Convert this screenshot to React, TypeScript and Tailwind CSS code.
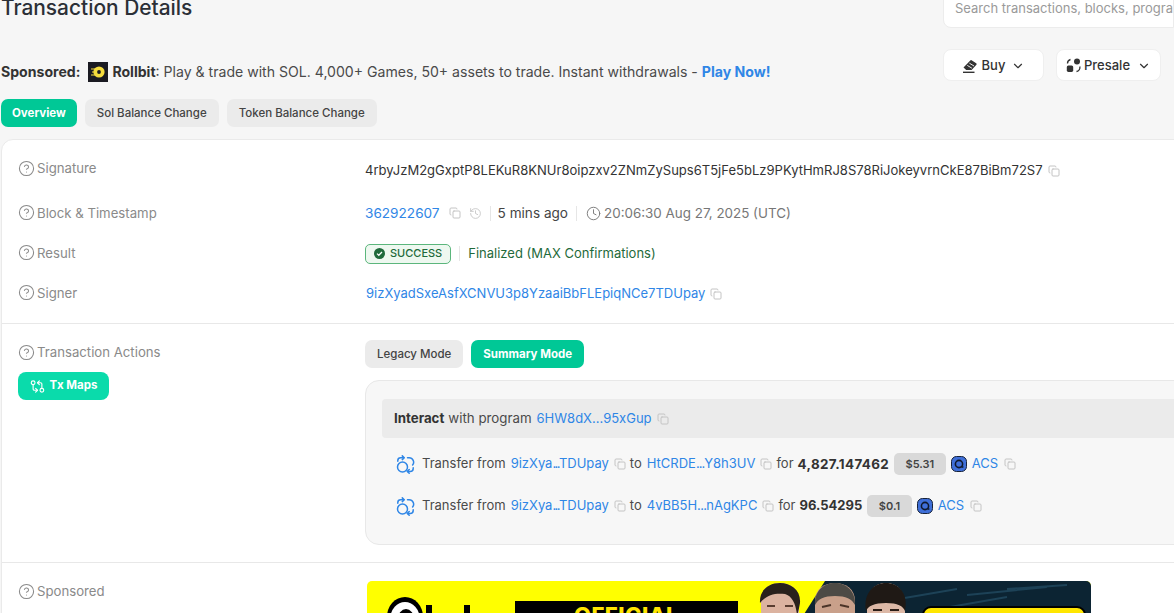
import { ChevronDown, CircleHelp, Clock, Copy, GitCompareArrows, History } from 'lucide-react';
import type { ReactNode } from 'react';

function CopyBtn({ className = '' }: { className?: string }) {
  return <Copy size={12} strokeWidth={2} className={`text-[#c4c4c4] shrink-0 ${className}`} />;
}

function Label({ children }: { children: ReactNode }) {
  return (
    <div className="flex items-center gap-[2px] text-[13.2px] leading-5 text-[#8a8a8a]">
      <CircleHelp size={17} strokeWidth={1.5} className="text-[#8a8a8a]" />
      {children}
    </div>
  );
}

function Row({ label, className, children }: { label: ReactNode; className: string; children: ReactNode }) {
  return (
    <div className={`flex items-center ${className}`}>
      <div className="w-[347px] shrink-0 pb-[2px]">
        <Label>{label}</Label>
      </div>
      <div className="flex items-center min-w-0 whitespace-nowrap text-[13px]">{children}</div>
    </div>
  );
}

function TransferIcon() {
  return (
    <svg width="19" height="19" viewBox="0 0 19 19" fill="none" stroke="#2f86e6" strokeWidth="1.5" strokeLinecap="round" strokeLinejoin="round" className="shrink-0">
      <circle cx="6.5" cy="12" r="5" />
      <path d="M11.5 2.8h1.7a4.4 4.4 0 0 1 3.4 7.2" />
      <path d="M1.8 6.2V5.4a2.8 2.8 0 0 1 2.8-2.6h3.2" />
      <path d="M6.3 0.9 8.2 2.8 6.3 4.6" />
      <path d="M17.2 12.8v.6a3 3 0 0 1-3 3h-2.6" />
      <path d="M13.2 14.5 11.3 16.4 13.2 18.2" />
    </svg>
  );
}

function AcsIcon() {
  return (
    <svg width="16" height="16" viewBox="0 0 16 16" className="shrink-0">
      <rect x="0.5" y="0.5" width="15" height="15" rx="5" fill="#3f6fd8" stroke="#16223a" />
      <circle cx="8" cy="8" r="3.6" fill="none" stroke="#10192c" strokeWidth="1.6" />
      <path d="M10.4 11h2" stroke="#10192c" strokeWidth="1.6" />
    </svg>
  );
}

function Addr({ head, tail, dots }: { head: string; tail: string; dots: string }) {
  return (
    <span className="text-[#2f86e6]">
      {head}
      <span className={dots}>...</span>
      {tail}
    </span>
  );
}

function Transfer({ children, amount, usd, pad, amountClass }: { children: ReactNode; amount: string; usd: string; pad: string; amountClass: string }) {
  return (
    <div className={`flex items-center whitespace-nowrap text-[13px] text-[#4a4a4a] ${pad}`}>
      <TransferIcon />
      <span className="ml-[7px]">Transfer from</span>
      <span className="ml-[5px]">
        <Addr head="9izXya" tail="TDUpay" dots="tracking-[-1.6px]" />
      </span>
      <CopyBtn className="ml-[5px]" />
      <span className="ml-[4px]">to</span>
      <span className="ml-[5px]">{children}</span>
      <CopyBtn className="ml-[5px]" />
      <span className="ml-[4px]">for</span>
      <span className={`ml-[4px] font-bold text-[#333333] ${amountClass}`}>{amount}</span>
      <span className="ml-[5px] rounded-[5px] bg-[#d9d9d9] px-[11.5px] py-[3px] text-[11px] leading-[16px] font-semibold text-[#444444]">{usd}</span>
      <span className="ml-[5px] flex"><AcsIcon /></span>
      <span className="ml-[5px] text-[#2f86e6]">ACS</span>
      <CopyBtn className="ml-[6px]" />
    </div>
  );
}

function Banner() {
  return (
    <div className="relative ml-[2px] h-[60px] w-[724px] overflow-hidden rounded-t-[5px] bg-[#ffff00]">
      <svg width="724" height="60" viewBox="0 0 724 60" className="absolute inset-0">
        <ellipse cx="38" cy="36" rx="18" ry="20" fill="#000000" />
        <ellipse cx="38" cy="37" rx="14.5" ry="16" fill="#ffffff" />
        <ellipse cx="39" cy="38" rx="8" ry="10" fill="#000000" />
        <path d="M62 24v36M100 24v36" stroke="#000000" strokeWidth="6" />
        <polygon points="458,0 724,0 724,60 420,60" fill="#0c2433" />
        <path d="M520 20 590 8M600 14 680 6M560 30 640 16M640 8 700 4" stroke="#1d4257" strokeWidth="2" />
        <path d="M394 60V20c0-12 9-18 19-18s19 6 19 18v40z" fill="#dcb3a0" />
        <path d="M393 22c-1-13 9-20 20-20s21 7 20 20c-1 6-2 10-3 12-1-11-5-19-12-21-9-1-18 0-25 9z" fill="#2a211c" />
        <path d="M400 25h8M418 25h8" stroke="#5a3d30" strokeWidth="2" />
        <path d="M448 60V20c0-12 9-18 20-18s20 6 20 18v40z" fill="#c9a08a" />
        <path d="M448 24c-1-14 9-22 20-22s21 8 20 22c-3-6-9-9-20-9s-17 3-20 9z" fill="#4d4a45" />
        <path d="M455 26l9-2M473 24l9 2" stroke="#4b3428" strokeWidth="2" />
        <path d="M500 60V24c0-14 8-22 19-22s19 8 19 22v36z" fill="#dcb8a6" />
        <path d="M499 30c-3-18 8-28 20-28s23 10 19 28c-2-5-7-8-19-8s-18 3-20 8z" fill="#1f1915" />
        <path d="M506 29h9M523 29h9" stroke="#2a1d16" strokeWidth="2" />
        <path d="M556 60V34a8 8 0 0 1 8-8h146a8 8 0 0 1 8 8v26z" fill="#ffe600" stroke="#000000" strokeWidth="2" />
      </svg>
      <div className="absolute left-[148px] top-[20px] h-[40px] w-[223px] bg-black pt-[2px] text-center text-[22px] leading-[24px] font-extrabold tracking-[0.5px] text-[#ffe600]">OFFICIAL</div>
    </div>
  );
}

export default function App() {
  return (
    <div className="h-[613px] w-[1174px] overflow-hidden bg-[#f6f6f6] text-[#333333] [font-family:Inter,sans-serif]">
      <div className="flex h-[29px] items-start justify-between">
        <h1 className="-mt-[6px] pl-[1px] text-[20.9px] leading-[28px] font-medium text-[#2b2f36]">Transaction Details</h1>
        <div className="-mt-[11px] flex h-[39px] w-[231px] items-center overflow-hidden rounded-bl-[8px] border border-[#ececec] bg-white pl-[11px] whitespace-nowrap text-[13px] text-[#9a9a9a]">
          Search transactions, blocks, programs and tokens
        </div>
      </div>

      <div className="mt-[20px] flex h-[32px] items-start justify-between pl-[1px]">
        <div className="mt-[12px] flex items-center whitespace-nowrap text-[14.08px] text-[#4a4a4a]">
          <span className="font-bold text-[#333333]">Sponsored:</span>
          <svg width="20" height="20" viewBox="0 0 20 20" className="ml-[8px]">
            <rect width="20" height="20" fill="#1b1b22" />
            <circle cx="11" cy="10" r="5.6" fill="#f5dc3d" />
            <circle cx="11" cy="10" r="1.9" fill="#1b1b22" />
            <path d="M3 7h4M4 10h3M3 13h4" stroke="#f5dc3d" strokeWidth="1" />
          </svg>
          <span className="ml-[4px] font-bold text-[#333333]">Rollbit</span>
          <span>: Play &amp; trade with SOL. 4,000+ Games, 50+ assets to trade. Instant withdrawals -&nbsp;</span>
          <span className="font-bold text-[#2f86e6]">Play Now!</span>
        </div>
        <div className="flex items-center gap-[12px] pr-[13px]">
          <button type="button" className="flex h-[32px] w-[101px] items-center justify-center gap-[4px] rounded-[8px] border border-[#efefef] bg-white pt-px text-[13px] font-medium text-[#333333]">
            <svg width="16" height="16" viewBox="0 0 16 16" fill="#333333">
              <path d="M1.5 9.5 8.3 2.4a1 1 0 0 1 1.3-.1l4.6 3a1 1 0 0 1 .2 1.5L9.6 12H4.2z" />
              <path d="M1 14.3h11.5" stroke="#333333" strokeWidth="1.4" />
              <path d="M5.3 7.4l4.6 2.8M7.4 5.2l4.6 2.8" stroke="#ffffff" strokeWidth="0.9" />
            </svg>
            Buy
            <ChevronDown size={14} strokeWidth={2} className="ml-[2px]" />
          </button>
          <button type="button" className="flex h-[32px] w-[105px] items-center justify-center gap-[3px] rounded-[8px] border border-[#efefef] bg-white pt-px text-[13px] font-medium text-[#333333]">
            <svg width="15" height="15" viewBox="0 0 15 15">
              <circle cx="11" cy="3.5" r="3" fill="#333333" />
              <rect x="0.8" y="7.5" width="6.4" height="6.4" rx="1.6" fill="#333333" />
              <path d="M1.5 5.5A4 4 0 0 1 4.5 1.5M13.8 8.5A4 4 0 0 1 10.5 13.5" fill="none" stroke="#333333" strokeWidth="1.3" />
            </svg>
            Presale
            <ChevronDown size={14} strokeWidth={2} className="ml-[4px]" />
          </button>
        </div>
      </div>

      <div className="mt-[18px] flex gap-[8px] pl-[1px] text-[11.5px] leading-[28px]">
        <div className="h-[28px] rounded-[7px] bg-[#00c896] px-[11px] font-bold text-white">Overview</div>
        <div className="h-[28px] rounded-[7px] bg-[#ebebeb] px-[12px] font-medium text-[#444444]">Sol Balance Change</div>
        <div className="h-[28px] rounded-[7px] bg-[#ebebeb] px-[12px] font-medium text-[#444444]">Token Balance Change</div>
      </div>

      <div className="mt-[12px] ml-[1px] h-[500px] w-[1200px] rounded-tl-[12px] border border-[#eaeaea] bg-white pl-[16px]">
        <Row label="Signature" className="h-[58px]">
          <span className="flex items-center pt-[4px]">
            <span className="text-[#333333] text-[13.04px]">4rbyJzM2gGxptP8LEKuR8KNUr8oipzxv2ZNmZySups6T5jFe5bLz9PKytHmRJ8S78RiJokeyvrnCkE87BiBm72S7</span>
            <CopyBtn className="ml-[5px]" />
          </span>
        </Row>
        <Row label="Block &amp; Timestamp" className="h-[31px]">
          <span className="text-[13.6px] text-[#2f86e6]">362922607</span>
          <CopyBtn className="ml-[9px]" />
          <History size={13} strokeWidth={1.6} className="ml-[8px] text-[#c4c4c4]" />
          <span className="ml-[8px] h-[15px] w-px bg-[#e6e6e6]" />
          <span className="ml-[7px] text-[13.6px] text-[#444444]">5 mins ago</span>
          <span className="ml-[8px] h-[15px] w-px bg-[#e6e6e6]" />
          <Clock size={15} strokeWidth={1.5} className="ml-[9px] text-[#777777]" />
          <span className="ml-[3px] text-[13.4px] text-[#777777]">20:06:30 Aug 27, 2025 (UTC)</span>
        </Row>
        <Row label="Result" className="mt-[9px] h-[31px]">
          <span className="flex h-[20px] items-center gap-[5px] rounded-[5px] border border-[#5bb67c] bg-[#eef8f0] px-[8px] text-[11px] font-medium text-[#1f6a3b]">
            <svg width="11" height="11" viewBox="0 0 11 11">
              <circle cx="5.5" cy="5.5" r="5.5" fill="#1f6a3b" />
              <path d="M3 5.6 4.8 7.3 8 4" fill="none" stroke="#ffffff" strokeWidth="1.3" />
            </svg>
            SUCCESS
          </span>
          <span className="ml-[8px] h-[15px] w-px bg-[#e6e6e6]" />
          <span className="ml-[8px] text-[#1f6a3b]">Finalized (MAX Confirmations)</span>
        </Row>
        <Row label="Signer" className="mt-[9px] h-[31px]">
          <span className="ml-px text-[#2f86e6]">9izXyadSxeAsfXCNVU3p8YzaaiBbFLEpiqNCe7TDUpay</span>
          <CopyBtn className="ml-[5px]" />
        </Row>

        <div className="-ml-[16px] mt-[14px] h-px bg-[#e8e8e8]" />

        <div className="flex pt-[16px]">
          <div className="w-[347px] shrink-0">
            <div className="pt-[2px]"><Label>Transaction Actions</Label></div>
            <div className="mt-[10px] flex h-[28px] w-[91px] items-center justify-center gap-[5px] rounded-[8px] bg-[#0adbab] text-[11.5px] font-bold text-white">
              <GitCompareArrows size={15} strokeWidth={1.8} />
              Tx Maps
            </div>
          </div>
          <div className="min-w-0 flex-1">
            <div className="flex gap-[8px] text-[11.5px] leading-[28px]">
              <div className="h-[28px] rounded-[7px] bg-[#ebebeb] px-[12px] font-medium text-[#444444]">Legacy Mode</div>
              <div className="h-[28px] rounded-[7px] bg-[#00c896] px-[12px] font-bold text-white">Summary Mode</div>
            </div>
            <div className="mt-[12px] h-[165px] rounded-[14px] border border-[#e8e8e8] bg-[#f7f7f7] pt-[18px] pl-[16px]">
              <div className="flex h-[39px] items-center rounded-[4px] bg-[#ebebeb] pl-[12px] text-[13.3px] text-[#4a4a4a]">
                <span className="font-bold text-[#333333]">Interact</span>
                <span className="ml-[4px]">with program</span>
                <span className="ml-[5px] text-[13px]">
                  <Addr head="6HW8dX" tail="95xGup" dots="" />
                </span>
                <CopyBtn className="ml-[5px]" />
              </div>
              <Transfer pad="mt-[15px] pl-[14px]" amount="4,827.147462" amountClass="text-[13.4px] tracking-[0.35px]" usd="$5.31">
                <Addr head="HtCRDE" tail="Y8h3UV" dots="tracking-[-1px]" />
              </Transfer>
              <Transfer pad="mt-[20px] pl-[14px]" amount="96.54295" amountClass="" usd="$0.1">
                <Addr head="4vBB5H" tail="nAgKPC" dots="tracking-[-0.7px]" />
              </Transfer>
            </div>
          </div>
        </div>

        <div className="-ml-[16px] mt-[17px] h-px bg-[#e8e8e8]" />

        <div className="flex pt-[18px]">
          <div className="w-[347px] shrink-0"><Label>Sponsored</Label></div>
          <Banner />
        </div>
      </div>
    </div>
  );
}
